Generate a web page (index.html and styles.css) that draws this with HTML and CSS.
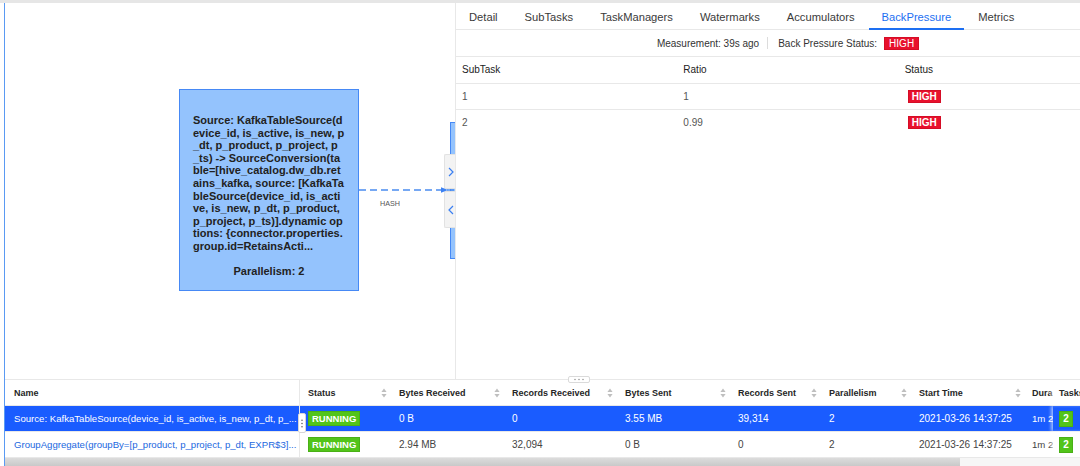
FILE: index.html
```html
<!DOCTYPE html>
<html lang="en">
<head>
<meta charset="utf-8">
<title>Flink Job Vertex</title>
<link rel="stylesheet" href="styles.css">
</head>
<body>
<div class="topbar"></div>
<div class="app">
  <div class="upper">
    <div class="graph">
      <div class="node node-main">
        <div class="node-text">
          <span>Source: KafkaTableSource(d</span>
          <span>evice_id, is_active, is_new, p</span>
          <span>_dt, p_product, p_project, p</span>
          <span>_ts) -&gt; SourceConversion(ta</span>
          <span>ble=[hive_catalog.dw_db.ret</span>
          <span>ains_kafka, source: [KafkaTa</span>
          <span>bleSource(device_id, is_acti</span>
          <span>ve, is_new, p_dt, p_product,</span>
          <span>p_project, p_ts)].dynamic op</span>
          <span>tions: {connector.properties.</span>
          <span>group.id=RetainsActi...</span>
        </div>
        <div class="node-par">Parallelism: 2</div>
      </div>
      <div class="node node-partial"></div>
      <div class="toggle toggle-top">
        <svg width="6" height="10" viewBox="0 0 6 10"><path d="M1 1 L5 5 L1 9" fill="none" stroke="#3a7ff2" stroke-width="1.2"/></svg>
      </div>
      <div class="toggle toggle-bottom">
        <svg width="6" height="10" viewBox="0 0 6 10"><path d="M5 1 L1 5 L5 9" fill="none" stroke="#3a7ff2" stroke-width="1.2"/></svg>
      </div>
      <svg class="edges" width="450" height="376" viewBox="0 0 450 376">
        <line x1="354" y1="187" x2="450" y2="187" stroke="#4a8cf0" stroke-width="1.3" stroke-dasharray="7 4"/>
        <polygon points="436,184.3 443,187 436,189.7" fill="#3d82f2"/>
        <text x="385" y="202.5" text-anchor="middle" class="edge-label">HASH</text>
      </svg>
    </div>
    <div class="panel">
      <div class="panel-inner">
        <div class="tabs">
          <div class="tab">Detail</div>
          <div class="tab">SubTasks</div>
          <div class="tab">TaskManagers</div>
          <div class="tab">Watermarks</div>
          <div class="tab">Accumulators</div>
          <div class="tab active">BackPressure</div>
          <div class="tab">Metrics</div>
        </div>
        <div class="measure">
          <span>Measurement: 39s ago</span>
          <span class="sep"></span>
          <span>Back Pressure Status:</span>
          <span class="tag-high">HIGH</span>
        </div>
        <table class="bp-table">
          <thead>
            <tr><th>SubTask</th><th>Ratio</th><th>Status</th></tr>
          </thead>
          <tbody>
            <tr><td>1</td><td>1</td><td><span class="tag-high in-cell">HIGH</span></td></tr>
            <tr class="last"><td>2</td><td>0.99</td><td><span class="tag-high in-cell">HIGH</span></td></tr>
          </tbody>
        </table>
      </div>
    </div>
  </div>

  <div class="lower">
    <div class="split-handle">
      <svg width="12" height="3" viewBox="0 0 12 3"><circle cx="2" cy="1.5" r="0.8" fill="#999"/><circle cx="6" cy="1.5" r="0.8" fill="#999"/><circle cx="10" cy="1.5" r="0.8" fill="#999"/></svg>
    </div>
    <div class="table-wrap">
      <div class="vrow vhead">
        <div class="cell c-name">Name</div>
        <div class="cell sortable"><span>Status</span><svg class="sorter" width="6" height="10" viewBox="0 0 6 10"><path d="M3 0.5 L5.6 4 L0.4 4 Z M3 9.5 L5.6 6 L0.4 6 Z" fill="#bfbfbf"/></svg></div>
        <div class="cell sortable"><span>Bytes Received</span><svg class="sorter" width="6" height="10" viewBox="0 0 6 10"><path d="M3 0.5 L5.6 4 L0.4 4 Z M3 9.5 L5.6 6 L0.4 6 Z" fill="#bfbfbf"/></svg></div>
        <div class="cell sortable"><span>Records Received</span><svg class="sorter" width="6" height="10" viewBox="0 0 6 10"><path d="M3 0.5 L5.6 4 L0.4 4 Z M3 9.5 L5.6 6 L0.4 6 Z" fill="#bfbfbf"/></svg></div>
        <div class="cell sortable"><span>Bytes Sent</span><svg class="sorter" width="6" height="10" viewBox="0 0 6 10"><path d="M3 0.5 L5.6 4 L0.4 4 Z M3 9.5 L5.6 6 L0.4 6 Z" fill="#bfbfbf"/></svg></div>
        <div class="cell sortable"><span>Records Sent</span><svg class="sorter" width="6" height="10" viewBox="0 0 6 10"><path d="M3 0.5 L5.6 4 L0.4 4 Z M3 9.5 L5.6 6 L0.4 6 Z" fill="#bfbfbf"/></svg></div>
        <div class="cell sortable"><span>Parallelism</span><svg class="sorter" width="6" height="10" viewBox="0 0 6 10"><path d="M3 0.5 L5.6 4 L0.4 4 Z M3 9.5 L5.6 6 L0.4 6 Z" fill="#bfbfbf"/></svg></div>
        <div class="cell sortable"><span>Start Time</span><svg class="sorter" width="6" height="10" viewBox="0 0 6 10"><path d="M3 0.5 L5.6 4 L0.4 4 Z M3 9.5 L5.6 6 L0.4 6 Z" fill="#bfbfbf"/></svg></div>
        <div class="cell c-dur">Dura</div>
        <div class="cell c-tasks">Tasks</div>
      </div>
      <div class="vrow selected">
        <div class="cell c-name name-text">Source: KafkaTableSource(device_id, is_active, is_new, p_dt, p_...</div>
        <div class="cell"><span class="tag-run">RUNNING</span></div>
        <div class="cell">0 B</div>
        <div class="cell">0</div>
        <div class="cell">3.55 MB</div>
        <div class="cell">39,314</div>
        <div class="cell">2</div>
        <div class="cell">2021-03-26 14:37:25</div>
        <div class="cell c-dur">1m 2</div>
        <div class="cell c-tasks"><span class="tag-count">2</span></div>
      </div>
      <div class="vrow">
        <div class="cell c-name name-text link">GroupAggregate(groupBy=[p_product, p_project, p_dt, EXPR$3]...</div>
        <div class="cell"><span class="tag-run">RUNNING</span></div>
        <div class="cell">2.94 MB</div>
        <div class="cell">32,094</div>
        <div class="cell">0 B</div>
        <div class="cell">0</div>
        <div class="cell">2</div>
        <div class="cell">2021-03-26 14:37:25</div>
        <div class="cell c-dur">1m 2</div>
        <div class="cell c-tasks"><span class="tag-count">2</span></div>
      </div>
    </div>
    <div class="col-handle">
      <svg width="2" height="9" viewBox="0 0 2 9"><circle cx="1" cy="1.2" r="0.8" fill="#666"/><circle cx="1" cy="4.5" r="0.8" fill="#666"/><circle cx="1" cy="7.8" r="0.8" fill="#666"/></svg>
    </div>
    <div class="scrollbar"><div class="thumb"></div></div>
  </div>
</div>
</body>
</html>
```

FILE: styles.css
```css
* { box-sizing: border-box; }

html, body {
  margin: 0;
  padding: 0;
  width: 1080px;
  height: 466px;
  overflow: hidden;
  background: #ffffff;
  font-family: "Liberation Sans", Arial, Helvetica, sans-serif;
  color: #333;
}

.topbar {
  height: 3px;
  background: #e6e6e6;
}

.app {
  margin-left: 4px;
  border-left: 1px solid #5a9af3;
  height: 463px;
  display: flex;
  flex-direction: column;
}

.upper {
  height: 376px;
  display: flex;
}

/* ---------- graph canvas ---------- */
.graph {
  width: 450px;
  height: 376px;
  position: relative;
  overflow: hidden;
  background: #fff;
}

.node {
  position: absolute;
  background: #94c3fd;
  border: 1px solid #4689f5;
}

.node-main {
  left: 174px;
  top: 86px;
  width: 180px;
  height: 202px;
  padding-top: 24px;
  color: #222;
}

.node-text {
  padding-left: 13px;
  font-size: 11px;
  font-weight: bold;
  line-height: 12.6px;
}

.node-text span {
  display: block;
  white-space: nowrap;
}

.node-par {
  margin-top: 11px;
  text-align: center;
  font-size: 11px;
  font-weight: bold;
  line-height: 14px;
}

.node-partial {
  left: 445px;
  top: 119px;
  width: 30px;
  height: 137px;
}

.toggle {
  position: absolute;
  left: 439px;
  width: 12px;
  background: #f3f3f3;
  border: 1px solid #e2e2e2;
  border-right: none;
  border-radius: 2px 0 0 2px;
  display: flex;
  align-items: center;
  justify-content: center;
}

.toggle-top { top: 151px; height: 35px; }
.toggle-bottom { top: 188px; height: 37px; }

.edges {
  position: absolute;
  left: 0;
  top: 0;
}

.edge-label {
  font-family: "Liberation Sans", Arial, sans-serif;
  font-size: 7.2px;
  fill: #555;
}

/* ---------- right panel ---------- */
.panel {
  flex: 1;
  border-left: 1px solid #e8e8e8;
  overflow: hidden;
  background: #fff;
}

.panel-inner {
  width: 664px;
}

.tabs {
  height: 27px;
  border-bottom: 1px solid #e8e8e8;
  display: flex;
  gap: 1px;
}

.tab {
  position: relative;
  padding: 2px 13px 0;
  height: 26px;
  line-height: 24px;
  font-size: 11.2px;
  color: #3a3a3a;
  white-space: nowrap;
}

.tab.active {
  color: #1d6ff2;
}

.tab.active::after {
  content: "";
  position: absolute;
  left: 0;
  right: 0;
  bottom: -1px;
  height: 2px;
  background: #1d6ff2;
}

.measure {
  height: 27px;
  border-bottom: 1px solid #e8e8e8;
  display: flex;
  align-items: center;
  justify-content: center;
  font-size: 10px;
  color: #333;
}

.sep {
  width: 1px;
  height: 12px;
  background: #dcdcdc;
  margin: 0 10px 0 8px;
}

.tag-high {
  display: inline-block;
  margin-left: 7px;
  height: 13px;
  padding: 0 4px;
  background: #e8112d;
  border: 1px solid #d50d26;
  color: #fff;
  font-size: 10px;
  line-height: 11px;
}

.tag-high.in-cell {
  margin-left: 3px;
  font-weight: bold;
  padding: 0 3px;
}

.bp-table {
  width: 664px;
  border-collapse: collapse;
  table-layout: fixed;
}

.bp-table th,
.bp-table td {
  height: 26px;
  padding: 0 6px;
  text-align: left;
  border-bottom: 1px solid #e8e8e8;
  font-size: 10px;
  vertical-align: middle;
}

.bp-table th {
  font-weight: normal;
  color: #222;
}

.bp-table td {
  color: #555;
}

.bp-table tr.last td {
  border-bottom: none;
}

/* ---------- lower vertex table ---------- */
.lower {
  flex: 1;
  position: relative;
  border-top: 1px solid #e8e8e8;
  background: #fff;
}

.split-handle {
  position: absolute;
  top: -4px;
  left: 563px;
  width: 22px;
  height: 7px;
  background: #fff;
  border: 1px solid #dadada;
  border-radius: 2px;
  display: flex;
  align-items: center;
  justify-content: center;
  z-index: 3;
}

.table-wrap {
  width: 1075px;
  overflow: hidden;
}

.vrow {
  display: grid;
  grid-template-columns: 295px 91px 113px 113px 113px 91px 90px 114px 28px 59px;
  width: 1107px;
  height: 26px;
  border-bottom: 1px solid #e8e8e8;
  font-size: 10px;
  color: #444;
}

.cell {
  padding-left: 8px;
  display: flex;
  align-items: center;
  white-space: nowrap;
  overflow: hidden;
}

.c-name {
  padding-left: 9px;
  border-right: 1px solid #e8e8e8;
}

.c-dur {
  padding-left: 7px;
  font-size: 9.6px;
}

.c-tasks {
  padding-left: 6px;
  box-shadow: -2px 0 3px rgba(255, 255, 255, 0.6);
}

.name-text {
  font-size: 9.6px;
}

.link {
  color: #2268e0;
}

.vhead .cell {
  font-size: 9px;
  font-weight: bold;
  color: #262626;
}

.vhead .sortable {
  justify-content: space-between;
  padding-right: 4px;
}

.sorter {
  flex: none;
}

.vrow.selected {
  background: #1a5cff;
  color: #fff;
}

.tag-run {
  display: inline-block;
  height: 15px;
  line-height: 13px;
  padding: 0 3px;
  background: #52c41a;
  border: 1px solid #49b016;
  color: #fff;
  font-size: 9.5px;
  font-weight: bold;
}

.tag-count {
  display: inline-block;
  width: 14px;
  height: 16px;
  line-height: 14px;
  text-align: center;
  background: #52c41a;
  border: 1px solid #49b016;
  color: #fff;
  font-size: 10px;
  font-weight: bold;
}

.col-handle {
  position: absolute;
  left: 293px;
  top: 33px;
  width: 8px;
  height: 20px;
  background: #fff;
  border: 1px solid #d6d6d6;
  border-radius: 2px;
  display: flex;
  align-items: center;
  justify-content: center;
  z-index: 3;
}

.scrollbar {
  height: 8px;
  width: 1075px;
  background: #f6f6f6;
}

.thumb {
  width: 955px;
  height: 8px;
  background: linear-gradient(#dcdcdc, #c9c9c9);
}
```
